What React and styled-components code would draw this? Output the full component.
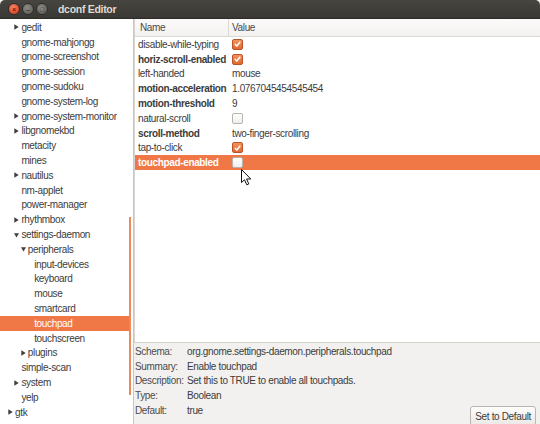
import React from 'react';
import styled, { createGlobalStyle } from 'styled-components';

const GlobalStyle = createGlobalStyle`
  html, body {
    margin: 0;
    padding: 0;
    background: #f2f1f0;
  }
  body {
    font-family: 'Liberation Sans', Arial, sans-serif;
    font-size: 10px;
    letter-spacing: -0.35px;
    color: #3c3c3c;
  }
`;

const Window = styled.div`
  width: 540px;
  height: 424px;
  display: flex;
  flex-direction: column;
  background: #f2f1f0;
  overflow: hidden;
`;

const TitleBar = styled.div`
  height: 19px;
  flex: none;
  display: flex;
  align-items: center;
  padding-left: 8px;
  gap: 2px;
  background: linear-gradient(#46453f, #393834);
  border-radius: 5px 5px 0 0;
  border-bottom: 1px solid #2c2b28;
  box-sizing: border-box;
`;

const WinButton = styled.span`
  width: 10px;
  height: 10px;
  border-radius: 50%;
  border: 1px solid #2e2d2a;
  background: ${(p) =>
    p.$close
      ? 'radial-gradient(circle at 40% 35%, #f3876a, #df4a2a 70%)'
      : 'radial-gradient(circle at 40% 35%, #8c8a84, #67655f 70%)'};
  display: flex;
  align-items: center;
  justify-content: center;
  color: ${(p) => (p.$close ? '#6b1d0b' : '#3b3a36')};
  font-size: 7px;
  line-height: 1;
  font-weight: bold;
  letter-spacing: 0;
`;

const Title = styled.span`
  margin-left: 8px;
  color: #dfdbd2;
  font-weight: bold;
  font-size: 10.5px;
  letter-spacing: -0.3px;
`;

const Body = styled.div`
  flex: 1;
  display: flex;
  min-height: 0;
`;

const TreePane = styled.div`
  width: 133px;
  flex: none;
  background: #fff;
  border-right: 1px solid #c9c6c0;
  padding-top: 1px;
  position: relative;
  overflow: hidden;
`;

const TreeRow = styled.div`
  height: 14.8px;
  display: flex;
  align-items: center;
  padding-left: ${(p) => 8 + p.$level * 6.4}px;
  margin-right: 4px;
  white-space: nowrap;
  color: ${(p) => (p.$selected ? '#fff' : '#3c3c3c')};
  background: ${(p) => (p.$selected ? '#f07746' : 'transparent')};
`;

const Expander = styled.span`
  width: 7px;
  flex: none;
  display: flex;
  align-items: center;
`;

const ScrollThumb = styled.div`
  position: absolute;
  right: 2px;
  top: 198px;
  width: 2px;
  height: 178px;
  background: #ec8a5c;
`;

const RightPane = styled.div`
  flex: 1;
  display: flex;
  flex-direction: column;
  min-width: 0;
`;

const ListBox = styled.div`
  flex: 1;
  background: #fff;
  border-left: 1px solid #d8d5d0;
  border-bottom: 1px solid #d5d2cd;
  position: relative;
`;

const ListHeader = styled.div`
  height: 18px;
  display: grid;
  grid-template-columns: 94px 1fr;
  background: linear-gradient(#fbfaf9, #f3f2f0);
  border-bottom: 1px solid #dcd9d4;
  box-sizing: border-box;
`;

const HeaderCell = styled.div`
  display: flex;
  align-items: center;
  padding-left: ${(p) => p.$pad}px;
  border-right: ${(p) => (p.$divider ? '1px solid #dcd9d4' : 'none')};
  color: #4a4a4a;
`;

const KeyRow = styled.div`
  height: 14.8px;
  display: grid;
  grid-template-columns: 94px 1fr;
  align-items: center;
  padding-left: 3px;
  white-space: nowrap;
  background: ${(p) => (p.$selected ? '#f07746' : 'transparent')};
  color: ${(p) => (p.$selected ? '#fff' : '#3c3c3c')};
`;

const KeyName = styled.span`
  font-weight: ${(p) => (p.$bold ? 'bold' : 'normal')};
`;

const Check = styled.span`
  width: 9px;
  height: 9px;
  border-radius: 2px;
  display: flex;
  align-items: center;
  justify-content: center;
  border: 1px solid ${(p) => (p.$on ? '#b8542a' : '#b7b4ae')};
  background: ${(p) => (p.$on ? 'linear-gradient(#f3925e, #e4682f)' : 'linear-gradient(#fff, #efeeec)')};
`;

const Cursor = styled.svg`
  position: absolute;
  left: 106px;
  top: 150px;
`;

const Details = styled.div`
  height: 81px;
  flex: none;
  display: flex;
  align-items: flex-end;
  justify-content: space-between;
  padding-top: 1px;
  box-sizing: border-box;
`;

const InfoGrid = styled.div`
  align-self: flex-start;
  display: grid;
  grid-template-columns: 52px 1fr;
  grid-auto-rows: 14.8px;
  align-items: center;
  padding-left: 1px;
  white-space: nowrap;
`;

const Label = styled.span`
  color: #4c4c4c;
`;

const DefaultButton = styled.button`
  font-family: inherit;
  font-size: 10px;
  letter-spacing: -0.35px;
  color: #3c3c3c;
  height: 20px;
  margin: 0 4px -2px 0;
  padding: 0 4px;
  border: 1px solid #b9b6b0;
  border-radius: 3px;
  background: linear-gradient(#fdfdfc, #ebe9e6);
`;

const Triangle = ({ open, light }) => (
  <svg width="5" height="6" viewBox="0 0 5 6">
    {open ? (
      <path d="M0 1.2 L5 1.2 L2.5 5.6 Z" fill={light ? '#fff' : '#3f3f3f'} />
    ) : (
      <path d="M0.3 0.2 L4.7 3 L0.3 5.8 Z" fill={light ? '#fff' : '#3f3f3f'} />
    )}
  </svg>
);

const tree = [
  { name: 'gedit', level: 1, exp: 'closed' },
  { name: 'gnome-mahjongg', level: 1 },
  { name: 'gnome-screenshot', level: 1 },
  { name: 'gnome-session', level: 1 },
  { name: 'gnome-sudoku', level: 1 },
  { name: 'gnome-system-log', level: 1 },
  { name: 'gnome-system-monitor', level: 1, exp: 'closed' },
  { name: 'libgnomekbd', level: 1, exp: 'closed' },
  { name: 'metacity', level: 1 },
  { name: 'mines', level: 1 },
  { name: 'nautilus', level: 1, exp: 'closed' },
  { name: 'nm-applet', level: 1 },
  { name: 'power-manager', level: 1 },
  { name: 'rhythmbox', level: 1, exp: 'closed' },
  { name: 'settings-daemon', level: 1, exp: 'open' },
  { name: 'peripherals', level: 2, exp: 'open' },
  { name: 'input-devices', level: 3 },
  { name: 'keyboard', level: 3 },
  { name: 'mouse', level: 3 },
  { name: 'smartcard', level: 3 },
  { name: 'touchpad', level: 3, selected: true },
  { name: 'touchscreen', level: 3 },
  { name: 'plugins', level: 2, exp: 'closed' },
  { name: 'simple-scan', level: 1 },
  { name: 'system', level: 1, exp: 'closed' },
  { name: 'yelp', level: 1 },
  { name: 'gtk', level: 0, exp: 'closed' },
];

const keys = [
  { name: 'disable-while-typing', check: true },
  { name: 'horiz-scroll-enabled', bold: true, check: true },
  { name: 'left-handed', value: 'mouse' },
  { name: 'motion-acceleration', bold: true, value: '1.0767045454545454' },
  { name: 'motion-threshold', bold: true, value: '9' },
  { name: 'natural-scroll', check: false },
  { name: 'scroll-method', bold: true, value: 'two-finger-scrolling' },
  { name: 'tap-to-click', check: true },
  { name: 'touchpad-enabled', bold: true, check: false, selected: true },
];

const info = [
  ['Schema:', 'org.gnome.settings-daemon.peripherals.touchpad'],
  ['Summary:', 'Enable touchpad'],
  ['Description:', 'Set this to TRUE to enable all touchpads.'],
  ['Type:', 'Boolean'],
  ['Default:', 'true'],
];

const App = () => {
  return (
    <Window>
      <GlobalStyle />
      <TitleBar>
        <WinButton $close>×</WinButton>
        <WinButton>–</WinButton>
        <WinButton>□</WinButton>
        <Title>dconf Editor</Title>
      </TitleBar>
      <Body>
        <TreePane>
          {tree.map((t) => (
            <TreeRow key={t.name} $level={t.level} $selected={t.selected}>
              <Expander>{t.exp && <Triangle open={t.exp === 'open'} light={t.selected} />}</Expander>
              {t.name}
            </TreeRow>
          ))}
          <ScrollThumb />
        </TreePane>
        <RightPane>
          <ListBox>
            <ListHeader>
              <HeaderCell $pad={5} $divider>Name</HeaderCell>
              <HeaderCell $pad={3}>Value</HeaderCell>
            </ListHeader>
            {keys.map((k) => (
              <KeyRow key={k.name} $selected={k.selected}>
                <KeyName $bold={k.bold}>{k.name}</KeyName>
                {k.check !== undefined ? (
                  <Check $on={k.check}>
                    {k.check && (
                      <svg width="7" height="6" viewBox="0 0 7 6">
                        <path d="M0.8 3 L2.8 5 L6.2 0.8" stroke="#fff" strokeWidth="1.5" fill="none" />
                      </svg>
                    )}
                  </Check>
                ) : (
                  <span>{k.value}</span>
                )}
              </KeyRow>
            ))}
            <Cursor width="11" height="17" viewBox="0 0 11 17">
              <path d="M0.5 0.5 L0.5 13.5 L3.5 10.8 L5.8 15.8 L7.8 14.9 L5.6 10 L9.8 10 Z" fill="#fff" stroke="#111" strokeWidth="1" />
            </Cursor>
          </ListBox>
          <Details>
            <InfoGrid>
              {info.map(([l, v]) => (
                <React.Fragment key={l}>
                  <Label>{l}</Label>
                  <span>{v}</span>
                </React.Fragment>
              ))}
            </InfoGrid>
            <DefaultButton>Set to Default</DefaultButton>
          </Details>
        </RightPane>
      </Body>
    </Window>
  );
};

export default App;
